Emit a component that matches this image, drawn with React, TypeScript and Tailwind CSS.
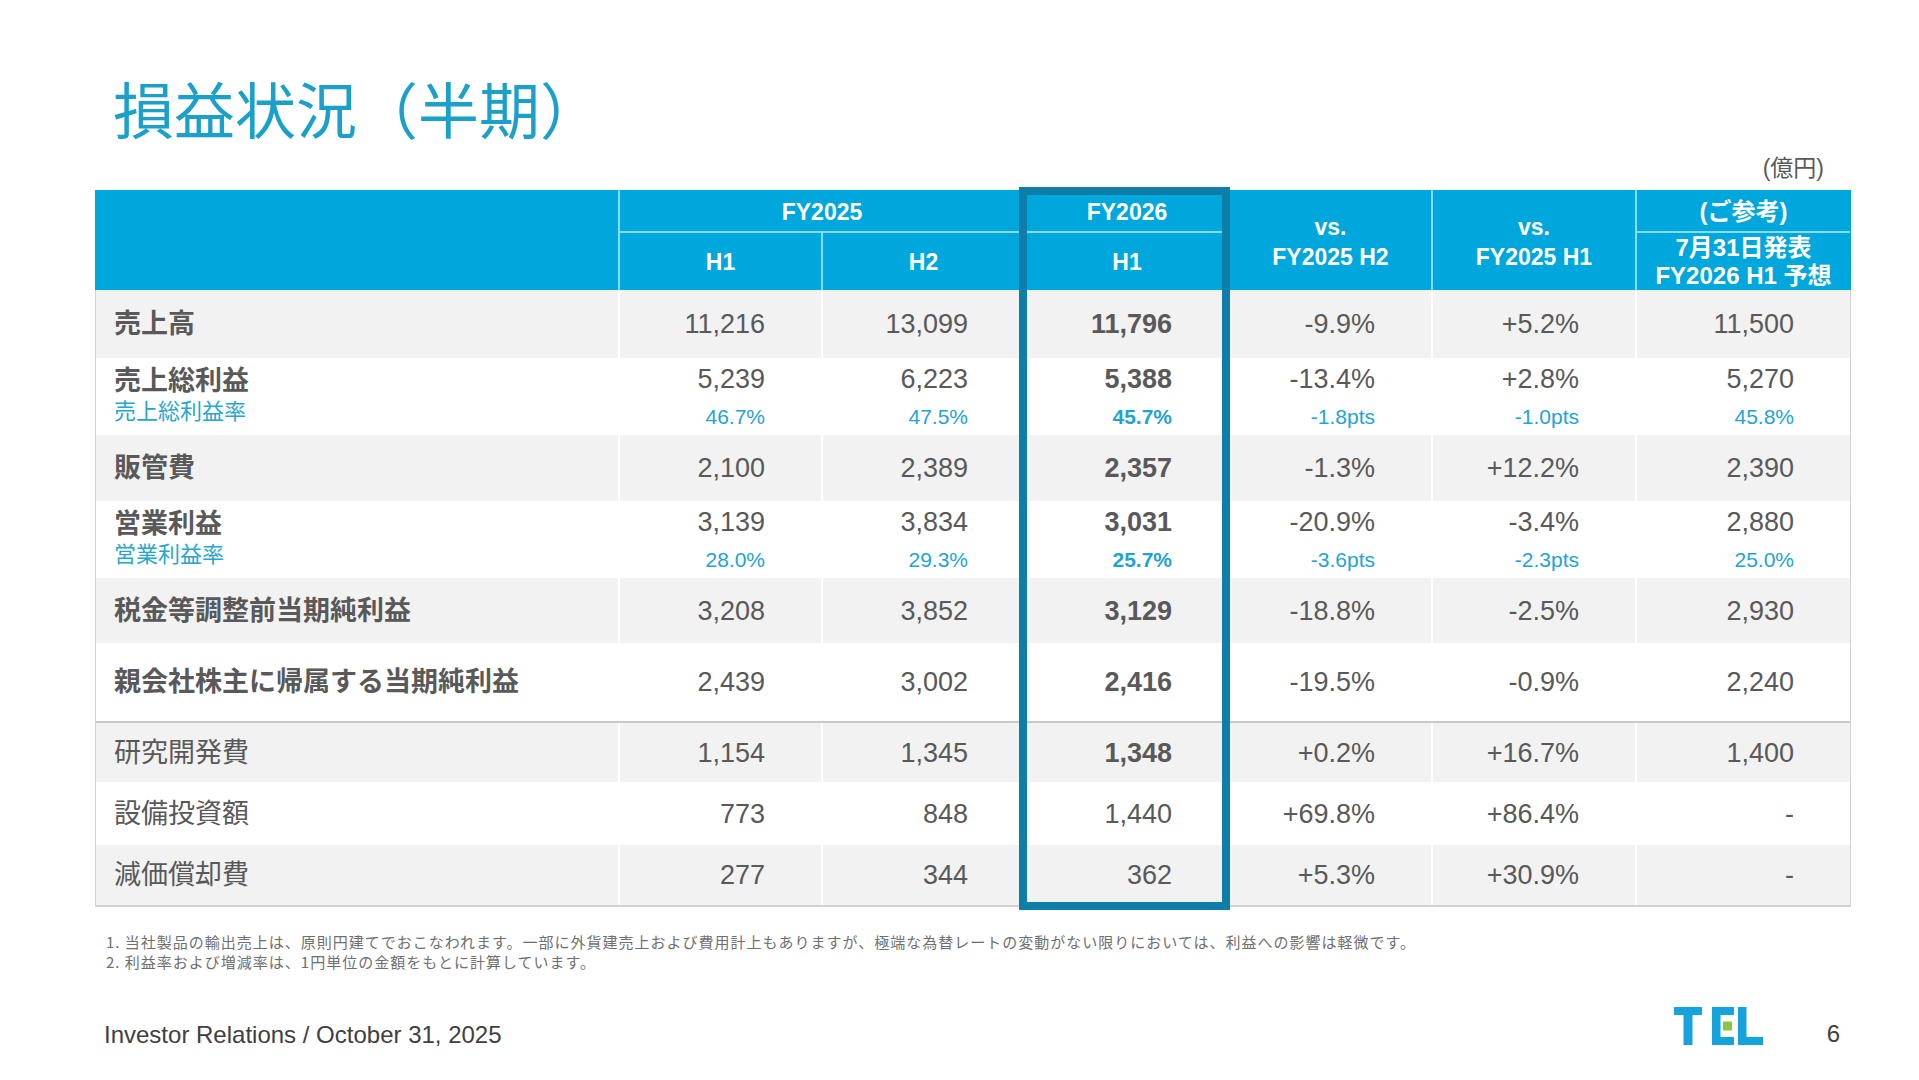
import clsx from "clsx";

const COLS = "grid grid-cols-[522px_203px_203px_204px_203px_204px_215px]";

type Row = {
  label: string;
  sub?: string;
  bold: boolean;
  h: string;
  gray: boolean;
  sep?: boolean;
  vals: string[];
  subs?: string[];
  boldCol?: boolean;
};

const ROWS: Row[] = [
  { label: "売上高", bold: true, h: "h-[68px]", gray: true, boldCol: true, vals: ["11,216", "13,099", "11,796", "-9.9%", "+5.2%", "11,500"] },
  {
    label: "売上総利益",
    sub: "売上総利益率",
    bold: true,
    h: "h-[77px]",
    gray: false,
    boldCol: true,
    vals: ["5,239", "6,223", "5,388", "-13.4%", "+2.8%", "5,270"],
    subs: ["46.7%", "47.5%", "45.7%", "-1.8pts", "-1.0pts", "45.8%"],
  },
  { label: "販管費", bold: true, h: "h-[66px]", gray: true, boldCol: true, vals: ["2,100", "2,389", "2,357", "-1.3%", "+12.2%", "2,390"] },
  {
    label: "営業利益",
    sub: "営業利益率",
    bold: true,
    h: "h-[77px]",
    gray: false,
    boldCol: true,
    vals: ["3,139", "3,834", "3,031", "-20.9%", "-3.4%", "2,880"],
    subs: ["28.0%", "29.3%", "25.7%", "-3.6pts", "-2.3pts", "25.0%"],
  },
  { label: "税金等調整前当期純利益", bold: true, h: "h-[65px]", gray: true, boldCol: true, vals: ["3,208", "3,852", "3,129", "-18.8%", "-2.5%", "2,930"] },
  { label: "親会社株主に帰属する当期純利益", bold: true, h: "h-[78px]", gray: false, boldCol: true, vals: ["2,439", "3,002", "2,416", "-19.5%", "-0.9%", "2,240"] },
  { label: "研究開発費", bold: false, h: "h-[61px]", gray: true, sep: true, boldCol: true, vals: ["1,154", "1,345", "1,348", "+0.2%", "+16.7%", "1,400"] },
  { label: "設備投資額", bold: false, h: "h-[63px]", gray: false, vals: ["773", "848", "1,440", "+69.8%", "+86.4%", "-"] },
  { label: "減価償却費", bold: false, h: "h-[60px]", gray: true, vals: ["277", "344", "362", "+5.3%", "+30.9%", "-"] },
];

function TelLogo() {
  return (
    <svg width="90" height="38" viewBox="0 0 90 38" aria-label="TEL">
      <g fill="#16a2db">
        <rect x="0" y="0" width="28" height="8" />
        <rect x="9.5" y="0" width="9" height="38" />
        <rect x="38" y="0" width="8.5" height="38" />
        <rect x="38" y="0" width="22" height="8" />
        <rect x="38" y="30" width="22" height="8" />
        <rect x="64" y="0" width="8.5" height="38" />
        <rect x="64" y="30" width="25" height="8" />
      </g>
      <rect x="49" y="14.5" width="9" height="9" fill="#8cc63f" />
    </svg>
  );
}

function HeaderTable() {
  const line = "border-[#86dcf0]";
  return (
    <div
      className={clsx(
        COLS,
        "grid-rows-[43px_57px] bg-[#00a7dd] px-px text-white font-bold text-[23px] leading-[28px]"
      )}
    >
      <div className="row-span-2" />
      <div className={clsx("col-span-2 border-l-2 border-b-2 pt-[3px] flex items-center justify-center", line)}>FY2025</div>
      <div className={clsx("border-l-2 border-b-2 pt-[3px] flex items-center justify-center", line)}>FY2026</div>
      <div className={clsx("row-span-2 border-l-2 pt-[4px] flex flex-col items-center justify-center leading-[30px]", line)}>
        <span>vs.</span>
        <span>FY2025 H2</span>
      </div>
      <div className={clsx("row-span-2 border-l-2 pt-[4px] flex flex-col items-center justify-center leading-[30px]", line)}>
        <span>vs.</span>
        <span>FY2025 H1</span>
      </div>
      <div className={clsx("border-l-2 border-b-2 pt-[2px] flex items-center justify-center text-[24px]", line)}>(ご参考)</div>
      <div className={clsx("border-l-2 pt-[1px] flex items-center justify-center", line)}>H1</div>
      <div className={clsx("border-l-2 pt-[1px] flex items-center justify-center", line)}>H2</div>
      <div className={clsx("border-l-2 pt-[1px] flex items-center justify-center", line)}>H1</div>
      <div className={clsx("border-l-2 flex flex-col items-center justify-center text-[24px] leading-[28px]", line)}>
        <span>7月31日発表</span>
        <span>FY2026 H1 予想</span>
      </div>
    </div>
  );
}

function BodyRow({ row }: { row: Row }) {
  const two = !!row.sub;
  return (
    <div
      className={clsx(
        COLS,
        row.h,
        row.gray ? "bg-[#f2f2f2]" : "bg-white",
        row.sep && "border-t-2 border-[#c9c9c9]"
      )}
    >
      <div
        className={clsx(
          "flex flex-col pl-[18px] text-[#595959]",
          two ? "justify-start pt-[7px]" : "justify-center"
        )}
      >
        <span className={clsx("text-[27px] leading-[32px]", row.bold ? "font-bold" : "font-normal")}>{row.label}</span>
        {row.sub && <span className="mt-[2px] text-[22px] leading-[26px] text-[#27a6d0]">{row.sub}</span>}
      </div>
      {row.vals.map((v, i) => (
        <div
          key={i}
          className={clsx(
            "border-l-2 border-white flex flex-col items-end pr-[56px]",
            two ? "justify-start pt-[6px]" : "justify-center"
          )}
        >
          <span
            className={clsx(
              "text-[27px] leading-[30px] text-[#595959]",
              i === 2 && row.boldCol ? "font-bold" : "font-normal"
            )}
          >
            {v}
          </span>
          {row.subs && (
            <span
              className={clsx(
                "mt-[11px] text-[21px] leading-[24px] text-[#1fa4d2]",
                i === 2 ? "font-bold" : "font-normal"
              )}
            >
              {row.subs[i]}
            </span>
          )}
        </div>
      ))}
    </div>
  );
}

export default function App() {
  return (
    <div className="w-[1919px] h-[1080px] bg-white flex flex-col overflow-hidden font-['Liberation_Sans','Noto_Sans_CJK_JP',sans-serif]">
      <h1 className="pl-[113px] pt-[77px] text-[61px] leading-[61px] font-normal text-[#1aa0c9] font-['Noto_Sans_CJK_JP',sans-serif]">
        損益状況（半期）
      </h1>
      <div className="mt-[17px] pr-[95px] text-right text-[23px] leading-[26px] text-[#595959]">(億円)</div>

      <div className="relative mt-[9px] ml-[95px] w-[1756px]">
        <HeaderTable />
        <div className="border-l border-r border-b-2 border-[#d2d2d2]">
          {ROWS.map((r) => (
            <BodyRow key={r.label} row={r} />
          ))}
        </div>
        {/* FY2026 H1 highlight frame */}
        <div className="absolute left-[924px] top-[-3px] w-[211px] h-[723px] border-[8px] border-[#0e7ea8] pointer-events-none" />
      </div>

      <div className="mt-[25px] pl-[106px] text-[15px] leading-[20px] tracking-[1px] text-[#6f6f6f] font-['Noto_Sans_CJK_JP',sans-serif]">
        <p>1. 当社製品の輸出売上は、原則円建てでおこなわれます。一部に外貨建売上および費用計上もありますが、極端な為替レートの変動がない限りにおいては、利益への影響は軽微です。</p>
        <p>2. 利益率および増減率は、1円単位の金額をもとに計算しています。</p>
      </div>

      <div className="mt-auto mb-[31px] flex items-start">
        <p className="ml-[104px] mt-[14px] text-[24px] leading-[28px] text-[#404040]">
          Investor Relations / October 31, 2025
        </p>
        <div className="ml-auto">
          <TelLogo />
        </div>
        <p className="ml-[63px] mr-[79px] mt-[13px] text-[24px] leading-[28px] text-[#404040]">6</p>
      </div>
    </div>
  );
}
